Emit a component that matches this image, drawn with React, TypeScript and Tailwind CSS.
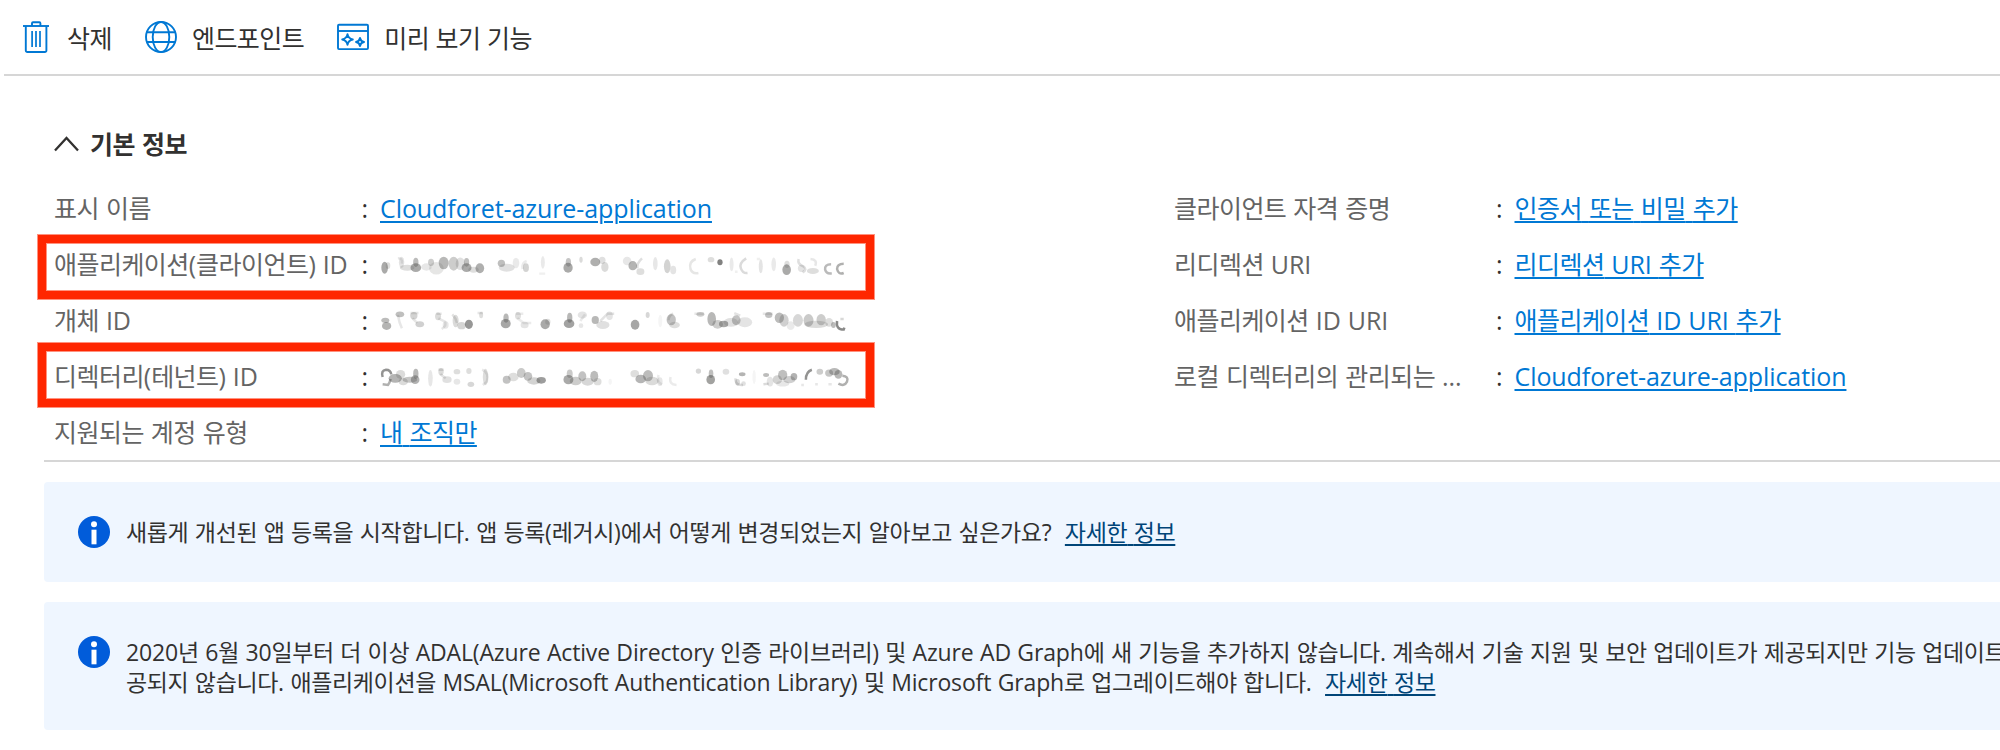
import type { ReactNode } from "react";

/* Hangul runs use the CJK face; everything else uses the Latin face. */
function T({ children, size = "lg" }: { children: string; size?: "lg" | "md" }) {
  const parts = children.match(/[\uac00-\ud7a3]+|[^\uac00-\ud7a3]+/g) ?? [];
  const ko =
    size === "lg"
      ? "font-['Noto_Sans_CJK_KR',sans-serif] leading-none tracking-[-0.54px]"
      : "font-['Noto_Sans_CJK_KR',sans-serif] leading-none tracking-[-0.36px]";
  const latin = size === "lg" ? "tracking-[-0.08px]" : "tracking-[-0.15px]";
  return (
    <>
      {parts.map((p, i) => (
        <span key={i} className={/[\uac00-\ud7a3]/.test(p) ? ko : latin}>
          {p}
        </span>
      ))}
    </>
  );
}

function TrashIcon() {
  return (
    <svg viewBox="0 0 32 32" className="h-8 w-8 shrink-0" fill="none" stroke="#0078d4" strokeWidth="1.9">
      <path d="M3 5h26" />
      <path d="M12 5V2.2a1 1 0 0 1 1-1h6.4a1 1 0 0 1 1 1V5" />
      <path d="M5.8 5v24.5a1.5 1.5 0 0 0 1.5 1.5h17.6a1.5 1.5 0 0 0 1.5-1.5V5" />
      <path d="M12.1 10v16M16 10v16M20 10v16" strokeWidth="1.7" />
    </svg>
  );
}

function GlobeIcon() {
  return (
    <svg viewBox="0 0 32 32" className="h-8 w-8 shrink-0" fill="none" stroke="#0078d4" strokeWidth="1.9">
      <circle cx="16" cy="16" r="15" />
      <ellipse cx="16" cy="16" rx="8.3" ry="15" />
      <path d="M2 11.2h28M2 21h28" />
    </svg>
  );
}

function PreviewIcon() {
  return (
    <svg viewBox="0 0 32 32" className="h-8 w-8 shrink-0" fill="none" stroke="#0078d4" strokeWidth="1.9">
      <rect x="1" y="3.7" width="30" height="24.4" rx="1" />
      <path d="M1 10h30" />
      <path d="M10.5 13.2Q11.3 17.7 15.8 18.5Q11.3 19.3 10.5 23.8Q9.7 19.3 5.2 18.5Q9.7 17.7 10.5 13.2Z" strokeLinejoin="round" />
      <path d="M23 17Q23.6 20.4 27 21Q23.6 21.6 23 25Q22.4 21.6 19 21Q22.4 20.4 23 17Z" strokeLinejoin="round" />
    </svg>
  );
}

function InfoIcon() {
  return (
    <svg viewBox="0 0 32 32" className="h-8 w-8 shrink-0">
      <circle cx="16" cy="16" r="16" fill="#015cda" />
      <circle cx="16" cy="8.2" r="3" fill="#fff" />
      <rect x="13.5" y="13.7" width="5" height="14.6" fill="#fff" />
    </svg>
  );
}

/* Erased identifiers: [cx, cy, rx, ry, opacity] smudges plus faint strokes. */
type Blob = [number, number, number, number, number];
type Smudge = { blobs: Blob[]; strokes: [string, number][] };

const clientId: Smudge = {
  blobs: [
    [44, 38, 10, 17, 0.5], [54, 32, 7, 9, 0.2], [95, 22, 8, 16, 0.16], [112, 38, 22, 8, 0.2],
    [138, 38, 16, 12, 0.5], [138, 22, 8, 13, 0.4], [170, 36, 16, 10, 0.14], [184, 22, 9, 10, 0.3],
    [200, 40, 22, 18, 0.15], [222, 24, 15, 18, 0.42], [252, 26, 15, 20, 0.3], [272, 26, 14, 18, 0.18],
    [291, 38, 15, 12, 0.5], [291, 22, 8, 12, 0.38], [312, 44, 16, 8, 0.2], [331, 40, 13, 14, 0.48],
    [396, 25, 11, 10, 0.38], [412, 38, 24, 11, 0.18], [440, 24, 10, 15, 0.12], [470, 38, 9, 12, 0.26],
    [521, 22, 6, 18, 0.12], [597, 38, 14, 14, 0.5], [598, 22, 8, 12, 0.35], [636, 14, 5, 8, 0.22],
    [679, 21, 15, 12, 0.48], [700, 16, 10, 10, 0.18], [708, 36, 11, 14, 0.22],
    [775, 18, 13, 12, 0.14], [792, 32, 13, 13, 0.45], [815, 50, 12, 9, 0.2], [860, 26, 7, 19, 0.14],
    [896, 34, 10, 20, 0.26], [914, 45, 9, 12, 0.16], [1028, 14, 10, 7, 0.2], [1055, 22, 8, 8, 0.75],
    [1090, 28, 6, 20, 0.12], [1178, 34, 6, 20, 0.16], [1217, 28, 7, 20, 0.12],
    [1256, 44, 13, 15, 0.5], [1257, 28, 8, 10, 0.2], [1300, 40, 10, 10, 0.16], [1335, 48, 18, 8, 0.2],
  ],
  strokes: [
    ["M982 12Q960 20 966 42Q972 58 990 54", 0.13], ["M1134 10Q1112 24 1118 40Q1124 56 1138 54", 0.18],
    ["M1292 12Q1288 28 1306 34Q1320 44 1304 52", 0.16], ["M1328 12Q1350 14 1342 32", 0.12],
    ["M1390 28Q1370 28 1372 44Q1376 58 1392 55", 0.35], ["M1428 26Q1408 26 1408 42Q1412 60 1428 54", 0.4],
    ["M820 10Q804 24 806 40", 0.16], ["M84 10Q98 8 96 26", 0.12], ["M472 18Q456 24 460 42", 0.1],
    ["M1100 50H1108M510 56H528M1166 12H1176", 0.08],
  ],
};

const objectId: Smudge = {
  blobs: [
    [50, 45, 14, 11, 0.45], [46, 28, 12, 7, 0.4], [90, 10, 13, 8, 0.38], [132, 14, 11, 10, 0.26],
    [150, 40, 13, 8, 0.28], [205, 16, 9, 11, 0.22], [228, 42, 9, 10, 0.14], [258, 30, 9, 18, 0.22],
    [276, 44, 13, 10, 0.25], [298, 40, 12, 13, 0.62], [335, 12, 6, 9, 0.2],
    [409, 38, 15, 13, 0.52], [410, 21, 8, 13, 0.42], [446, 14, 9, 10, 0.2], [466, 42, 12, 9, 0.16],
    [528, 40, 14, 14, 0.5], [536, 32, 8, 8, 0.2], [600, 38, 16, 12, 0.55], [602, 20, 8, 14, 0.42],
    [640, 12, 14, 10, 0.16], [636, 44, 7, 6, 0.14], [679, 27, 11, 11, 0.42], [702, 42, 20, 11, 0.18],
    [722, 14, 10, 12, 0.16], [799, 41, 13, 14, 0.52], [837, 12, 6, 8, 0.24], [875, 30, 6, 18, 0.06],
    [908, 26, 14, 16, 0.36], [918, 42, 16, 9, 0.2], [996, 10, 12, 6, 0.3],
    [1030, 24, 13, 20, 0.42], [1048, 40, 16, 12, 0.3], [1066, 39, 14, 9, 0.5], [1104, 28, 13, 14, 0.36],
    [1088, 34, 22, 12, 0.18], [1130, 34, 22, 14, 0.16], [1202, 12, 11, 8, 0.36], [1234, 20, 14, 15, 0.4],
    [1248, 28, 14, 18, 0.28], [1268, 44, 12, 12, 0.12], [1290, 28, 15, 18, 0.24], [1322, 28, 15, 18, 0.32],
    [1345, 40, 36, 10, 0.22], [1360, 26, 14, 16, 0.3], [1384, 34, 12, 12, 0.2], [1397, 42, 7, 8, 0.4],
  ],
  strokes: [
    ["M84 12Q88 36 96 52", 0.12], ["M122 6H146M128 22L142 36", 0.13], ["M200 8H216M206 22L226 32Q232 44 216 54", 0.12],
    ["M248 10Q258 20 262 36", 0.15], ["M440 8H462M444 22L464 36H486", 0.1], ["M648 10L634 30", 0.1],
    ["M694 30L716 8H736", 0.14], ["M914 8Q900 12 900 28", 0.15], ["M1098 6L1116 14", 0.14],
    ["M1408 30Q1404 56 1428 56L1430 50", 0.6], ["M1428 24L1418 24", 0.2], ["M324 6H340M978 8H1006M1184 8H1214", 0.12],
  ],
};

const tenantId: Smudge = {
  blobs: [
    [76, 34, 20, 12, 0.45], [92, 22, 14, 12, 0.22], [100, 44, 14, 10, 0.22], [120, 38, 22, 8, 0.34],
    [136, 38, 13, 12, 0.46], [138, 20, 8, 14, 0.42], [182, 34, 7, 24, 0.14], [214, 14, 8, 10, 0.22],
    [232, 38, 14, 9, 0.18], [262, 14, 10, 7, 0.2], [262, 44, 10, 8, 0.14], [298, 12, 8, 8, 0.2],
    [304, 52, 10, 7, 0.24], [348, 30, 8, 24, 0.2], [412, 38, 12, 11, 0.36], [432, 30, 16, 12, 0.2],
    [456, 18, 13, 14, 0.32], [476, 28, 13, 12, 0.36], [494, 42, 20, 10, 0.26], [516, 40, 14, 9, 0.58],
    [598, 38, 15, 13, 0.5], [602, 20, 9, 12, 0.32], [620, 42, 18, 12, 0.3], [640, 28, 12, 14, 0.36],
    [656, 44, 18, 11, 0.24], [676, 28, 12, 16, 0.4], [686, 44, 12, 10, 0.2], [724, 44, 5, 8, 0.06],
    [798, 20, 13, 10, 0.2], [816, 36, 16, 12, 0.44], [838, 26, 15, 16, 0.4], [850, 42, 20, 12, 0.22],
    [874, 44, 8, 12, 0.14], [990, 12, 8, 7, 0.24], [1027, 38, 13, 13, 0.56], [1028, 20, 7, 12, 0.38],
    [1073, 14, 10, 8, 0.18], [1122, 22, 10, 5, 0.45], [1108, 46, 7, 9, 0.24], [1126, 50, 7, 6, 0.18],
    [1158, 30, 5, 20, 0.06], [1194, 24, 9, 5, 0.4], [1206, 44, 10, 14, 0.16], [1228, 38, 14, 12, 0.26],
    [1244, 24, 14, 15, 0.38], [1264, 38, 18, 10, 0.28], [1278, 29, 10, 10, 0.46], [1244, 50, 20, 8, 0.14],
    [1356, 14, 10, 8, 0.3], [1384, 18, 12, 10, 0.34], [1400, 14, 16, 10, 0.42], [1412, 22, 12, 12, 0.42],
  ],
  strokes: [
    ["M38 30Q32 10 48 8Q62 8 64 22", 0.55], ["M38 52L54 54Q60 46 62 36", 0.4], ["M206 8H222M212 22L228 34", 0.14],
    ["M338 8Q360 18 352 44L340 54", 0.12], ["M870 24Q862 44 880 52", 0.1], ["M906 30Q900 52 924 54", 0.1],
    ["M1102 34Q1100 56 1124 54M1186 52L1202 50", 0.18], ["M1314 38Q1314 14 1332 8", 0.55],
    ["M1424 26Q1444 28 1438 44Q1430 60 1412 50", 0.4], ["M1300 54H1308M1342 52H1350M1382 52H1392", 0.12],
  ],
};

function Redacted({ data }: { data: Smudge }) {
  return (
    <svg viewBox="30 0 1420 66" className="mt-[3px] block h-[22px] w-[471px] blur-[0.7px]">
      <g fill="#3a3a38" opacity="0.85">
        {data.blobs.map(([cx, cy, rx, ry, o], i) => (
          <ellipse key={i} cx={cx} cy={cy} rx={rx} ry={ry + 1} opacity={o} />
        ))}
      </g>
      <g fill="none" stroke="#3a3a38" strokeWidth="7.5">
        {data.strokes.map(([d, o], i) => (
          <path key={i} d={d} opacity={o} />
        ))}
      </g>
    </svg>
  );
}

function Command({ icon, label }: { icon: ReactNode; label: string }) {
  return (
    <button className="flex items-center gap-[15px]">
      {icon}
      <span className="pt-0.5 text-[#323130]">
        <T>{label}</T>
      </span>
    </button>
  );
}

function Link({ children }: { children: string }) {
  return (
    <a className="text-[#0078d4] underline decoration-2 underline-offset-[3px]">
      <T>{children}</T>
    </a>
  );
}

function Row({ label, wide, children }: { label: string; wide?: boolean; children: ReactNode }) {
  return (
    <div className="flex h-14 items-center whitespace-nowrap">
      <div className={wide ? "w-[322px] text-[#646464]" : "w-[307.5px] text-[#646464]"}>
        <T>{label}</T>
      </div>
      <div className="w-[18.5px] text-[#323130]">:</div>
      <div>{children}</div>
    </div>
  );
}

function MoreLink() {
  return (
    <a className="ml-[7px] text-[#004578] underline decoration-2 underline-offset-[3px]">
      <T size="md">자세한 정보</T>
    </a>
  );
}

function Banner({ tall, children }: { tall?: boolean; children: ReactNode }) {
  return (
    <section
      className={
        tall
          ? "flex h-32 items-start gap-4 rounded-l bg-[#eff6ff] pt-[34px] pl-[34px]"
          : "flex h-[100px] items-start gap-4 rounded-l bg-[#eff6ff] pt-[34px] pl-[34px]"
      }
    >
      <InfoIcon />
      <div className="pt-px text-[23px] leading-[30px] whitespace-nowrap text-[#323130]">{children}</div>
    </section>
  );
}

export default function App() {
  return (
    <div className="relative h-[750px] w-[2000px] overflow-hidden bg-white font-['Open_Sans','Noto_Sans_CJK_KR',sans-serif] text-[25px] leading-[34px] [word-spacing:0.6px]">
      <header className="ml-1 flex h-[76px] items-center gap-[33px] border-b-2 border-[#d6d6d6] pl-4">
        <Command icon={<TrashIcon />} label="삭제" />
        <Command icon={<GlobeIcon />} label="엔드포인트" />
        <Command icon={<PreviewIcon />} label="미리 보기 기능" />
      </header>

      <main className="pl-11">
        <section className="border-b-2 border-[#d6d6d6] pl-2.5">
          <h2 className="flex h-[104px] items-center gap-2.5 pt-[31px] font-bold text-[#323130]">
            <svg viewBox="0 0 26 16" className="h-4 w-[26px]" fill="none" stroke="#323130" strokeWidth="2.3">
              <path d="M1 14.5L12.5 2L24 14.5" />
            </svg>
            <span>
              <T>기본 정보</T>
            </span>
          </h2>
          <div className="grid grid-cols-[1120px_1fr]">
            <div>
              <Row label="표시 이름">
                <Link>Cloudforet-azure-application</Link>
              </Row>
              <Row label="애플리케이션(클라이언트) ID">
                <Redacted data={clientId} />
              </Row>
              <Row label="개체 ID">
                <Redacted data={objectId} />
              </Row>
              <Row label="디렉터리(테넌트) ID">
                <Redacted data={tenantId} />
              </Row>
              <Row label="지원되는 계정 유형">
                <Link>내 조직만</Link>
              </Row>
            </div>
            <div>
              <Row wide label="클라이언트 자격 증명">
                <Link>인증서 또는 비밀 추가</Link>
              </Row>
              <Row wide label="리디렉션 URI">
                <Link>리디렉션 URI 추가</Link>
              </Row>
              <Row wide label="애플리케이션 ID URI">
                <Link>애플리케이션 ID URI 추가</Link>
              </Row>
              <Row wide label="로컬 디렉터리의 관리되는 ...">
                <Link>Cloudforet-azure-application</Link>
              </Row>
            </div>
          </div>
        </section>

        <div className="flex flex-col gap-5 pt-5">
          <Banner>
            <p>
              <T size="md">새롭게 개선된 앱 등록을 시작합니다. 앱 등록(레거시)에서 어떻게 변경되었는지 알아보고 싶은가요? </T>
              <MoreLink />
            </p>
          </Banner>
          <Banner tall>
            <p>
              <T size="md">2020년 6월 30일부터 더 이상 ADAL(Azure Active Directory 인증 라이브러리) 및 Azure AD Graph에 새 기능을 추가하지 않습니다. 계속해서 기술 지원 및 보안 업데이트가 제공되지만 기능 업데이트</T>
            </p>
            <p>
              <T size="md">공되지 않습니다. 애플리케이션을 MSAL(Microsoft Authentication Library) 및 Microsoft Graph로 업그레이드해야 합니다. </T>
              <MoreLink />
            </p>
          </Banner>
        </div>
      </main>

      <div className="absolute top-[235px] left-[38px] h-16 w-[836px] border-8 border-[#ff2600] shadow-[0_0_0_1px_#ff260080,inset_0_0_0_1px_#ff260080]" />
      <div className="absolute top-[343px] left-[38px] h-16 w-[836px] border-8 border-[#ff2600] shadow-[0_0_0_1px_#ff260080,inset_0_0_0_1px_#ff260080]" />
    </div>
  );
}
